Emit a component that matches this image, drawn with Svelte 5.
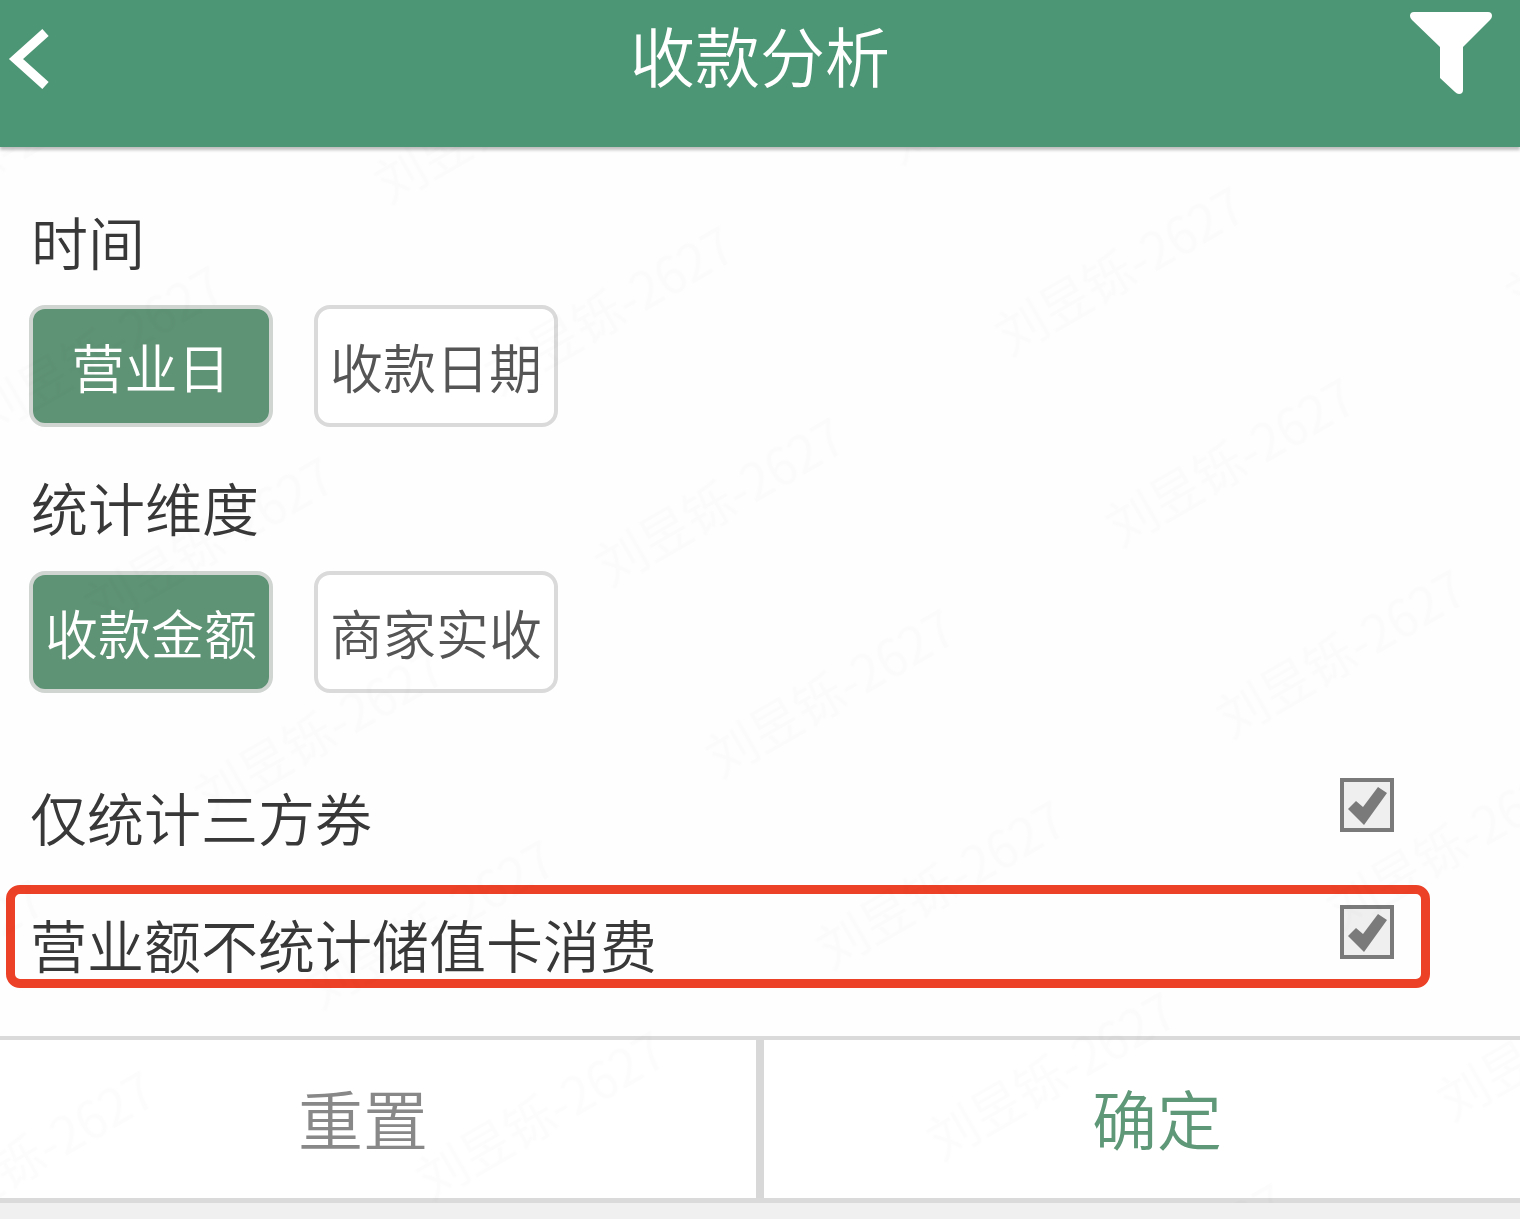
<script lang="ts">
	const groups = [
		{ name: 'time', title: '时间', options: ['营业日', '收款日期'] },
		{ name: 'dimension', title: '统计维度', options: ['收款金额', '商家实收'] }
	];

	let selected: Record<string, string> = $state({ time: '营业日', dimension: '收款金额' });
	let couponOnly = $state(true);
	let excludeCard = $state(true);

	function reset() {
		selected = { time: '营业日', dimension: '收款金额' };
		couponOnly = true;
		excludeCard = true;
	}
</script>

<div class="page">
	<header>
		<button class="icon back" type="button" aria-label="返回">
			<svg width="44" height="66" viewBox="0 0 44 66">
				<path
					d="M39.5 6.5 10 33l29.5 26.5"
					fill="none"
					stroke="#fff"
					stroke-width="9.5"
				/>
			</svg>
		</button>
		<h1>收款分析</h1>
		<button class="icon filter" type="button" aria-label="筛选">
			<svg width="84" height="84" viewBox="0 0 84 84">
				<path
					d="M5 1h74q4 0 4 4 0 2-2 4L54 36v43q0 4-4 4-2 0-4-2L31 67V36L3 9Q1 7 1 5q0-4 4-4Z"
					fill="#fff"
				/>
			</svg>
		</button>
	</header>

	<main>
		{#each groups as group (group.name)}
			<section>
				<h2>{group.title}</h2>
				<div class="chips">
					{#each group.options as option (option)}
						<button
							type="button"
							class="chip"
							class:active={selected[group.name] === option}
							aria-pressed={selected[group.name] === option}
							onclick={() => (selected[group.name] = option)}
						>
							{option}
						</button>
					{/each}
				</div>
			</section>
		{/each}

		<div class="checks">
			<label class="check">
				<span>仅统计三方券</span>
				<input type="checkbox" bind:checked={couponOnly} />
			</label>
			<label class="check marked">
				<span>营业额不统计储值卡消费</span>
				<input type="checkbox" bind:checked={excludeCard} />
			</label>
		</div>
	</main>

	<footer>
		<button type="button" class="reset" onclick={reset}>重置</button>
		<button type="button" class="confirm">确定</button>
	</footer>

	<!-- faint user watermark, tiled on the slant -->
	<svg class="watermark" aria-hidden="true">
		<defs>
			<pattern
				id="watermark"
				x="142"
				y="22"
				width="462"
				height="221"
				patternUnits="userSpaceOnUse"
				patternTransform="rotate(-30)"
			>
				<text x="231" y="128" text-anchor="middle" font-size="50">刘昱铄-2627</text>
			</pattern>
		</defs>
		<rect width="100%" height="100%" fill="url(#watermark)" />
	</svg>
</div>

<style>
	:global(body) {
		background: #f0f0f0;
	}

	.page {
		position: relative;
		background: #fefefe;
		color: #383838;
		font-family: 'Noto Sans CJK SC', sans-serif;
		font-weight: 350;
	}

	button {
		font: inherit;
		cursor: pointer;
	}

	header {
		position: relative;
		z-index: 1;
		display: grid;
		grid-template-columns: 1fr auto 1fr;
		align-items: start;
		height: 147px;
		background: #4d9675;
		box-shadow: 0 3px 3px rgba(0, 0, 0, 0.25);
	}

	h1 {
		margin: 0;
		color: #fff;
		font-size: 65px;
		font-weight: inherit;
		line-height: 108px;
	}

	.icon {
		display: flex;
		padding: 0;
		border: 0;
		background: none;
	}

	.back {
		justify-self: start;
		margin: 26px 0 0 6px;
	}

	.filter {
		justify-self: end;
		margin: 11px 27px 0 0;
	}

	main {
		padding-top: 53px;
	}

	section {
		padding: 0 29px;
		margin-bottom: 39px;
	}

	h2 {
		margin: 0 0 25px;
		padding-left: 2px;
		font-size: 57px;
		font-weight: inherit;
		line-height: 80px;
	}

	.chips {
		display: flex;
		gap: 41px;
	}

	.chip {
		width: 244px;
		height: 122px;
		padding: 0;
		border: 4px solid #dadada;
		border-radius: 16px;
		background: #fff;
		color: #555;
		font-size: 53px;
		line-height: 80px;
		white-space: nowrap;
	}

	.chip.active {
		border-color: #d0d5d2;
		background: #5f9375;
		color: #fff;
	}

	.checks {
		padding: 26px 90px 48px 6px;
	}

	.check {
		display: flex;
		justify-content: space-between;
		align-items: flex-start;
		height: 103px;
		padding: 0 27px 0 15px;
		box-sizing: border-box;
		border: 9px solid transparent;
		border-radius: 14px;
		font-size: 57px;
		line-height: 98px;
	}

	.check + .check {
		margin-top: 24px;
	}

	.marked {
		border-color: #ec4127;
	}

	input {
		appearance: none;
		width: 54px;
		height: 54px;
		margin: 11px 0 0;
		border: 4px solid #7a7a7a;
		background: #efefef;
	}

	input:checked::before {
		content: '';
		display: block;
		width: 46px;
		height: 46px;
		background: #7a7a7a;
		clip-path: polygon(4px 27px, 12px 19px, 19px 25px, 34px 5px, 43px 11px, 20px 43px);
	}

	footer {
		display: flex;
		border-top: 4px solid #dadada;
		border-bottom: 5px solid #dadada;
	}

	footer button {
		flex: 1;
		height: 158px;
		border: 0;
		background: #fff;
		font-size: 65px;
		line-height: 96px;
	}

	.reset {
		padding: 0 30px 4px 0;
		border-right: 8px solid #d8d8d8;
		color: #888;
	}

	.confirm {
		padding: 0 0 4px 30px;
		color: #5f9878;
	}

	.watermark {
		position: absolute;
		inset: 0;
		width: 100%;
		height: 100%;
		opacity: 0.008;
		pointer-events: none;
	}
</style>
